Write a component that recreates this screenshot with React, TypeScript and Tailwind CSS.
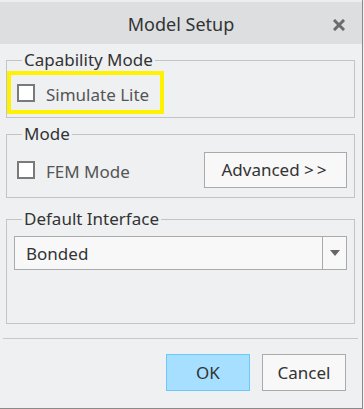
import React from "react"

const font = { fontFamily: '"Noto Sans", "Open Sans", sans-serif' }

function CheckBox() {
  return <span className="inline-block w-[18px] h-[18px] border-2 border-[#7a7a7a] bg-white shrink-0" />
}

export default function App() {
  return (
    <div className="w-[364px] h-[409px] bg-[#eef0f2] text-[#333]" style={font}>
      <div className="w-[363px] h-[409px] border-r border-b border-[#8a8a8a] flex flex-col">
        {/* title bar */}
        <div className="h-[44px] border-t-2 border-[#eceeef] bg-[#dcdedf] flex items-center relative shrink-0">
          <div className="flex-1 text-center text-[18px] text-[#333] pt-[2px]">Model Setup</div>
          <svg className="absolute right-[17px] top-[17px]" width="12" height="12" viewBox="0 0 12 12">
            <path d="M2 2 L10 10 M10 2 L2 10" stroke="#6b6b6b" strokeWidth="3" strokeLinecap="square" />
          </svg>
        </div>

        {/* capability mode */}
        <fieldset className="mt-[6px] ml-[6px] w-[349px] h-[68px] border border-[#c4c4c4] p-0">
          <legend className="ml-[15px] px-[2px] text-[17px] leading-[20px] text-[#333]">Capability Mode</legend>
          <div className="mt-[1px] w-[157px] h-[43px] border-4 border-[#fff200] flex items-center pl-[6px] gap-[11px]">
            <CheckBox />
            <span className="text-[17px] text-[#555] pt-[4px]">Simulate Lite</span>
          </div>
        </fieldset>

        {/* mode */}
        <fieldset className="mt-[6px] ml-[6px] w-[349px] h-[74px] border border-[#c4c4c4] p-0">
          <legend className="ml-[15px] px-[2px] text-[17px] leading-[20px] text-[#333]">Mode</legend>
          <div className="flex items-center pl-[10px] pr-[7px] mt-[8px]">
            <CheckBox />
            <span className="ml-[11px] text-[17px] text-[#555] pt-[4px]">FEM Mode</span>
            <button className="ml-auto w-[143px] h-[36px] bg-[#f8f8f8] border border-[#aaaaaa] text-[17px] text-[#333]">
              Advanced <span className="tracking-[3px]">&gt;&gt;</span>
            </button>
          </div>
        </fieldset>

        {/* default interface */}
        <fieldset className="mt-[11px] ml-[6px] w-[349px] h-[115px] border border-[#c4c4c4] p-0">
          <legend className="ml-[15px] px-[2px] text-[17px] leading-[20px] text-[#333]">Default Interface</legend>
          <div className="mt-[7px] ml-[7px] w-[333px] h-[34px] bg-[#f8f8f8] border border-[#aaaaaa] flex">
            <div className="flex-1 flex items-center pl-[11px] text-[17px] text-[#333] pt-[1px]">Bonded</div>
            <div className="w-[24px] border-l border-[#aaaaaa] flex items-center justify-center">
              <svg width="10" height="6" viewBox="0 0 10 6">
                <path d="M0 0 H10 L5 6 Z" fill="#666" />
              </svg>
            </div>
          </div>
        </fieldset>

        {/* separator */}
        <div className="mt-[14px] ml-[3px] w-[355px] h-px bg-[#c8c8c8]" />

        {/* buttons */}
        <div className="flex justify-end gap-[12px] pr-[16px] mt-[15px]">
          <button className="w-[84px] h-[37px] bg-[#a6dfff] border border-[#6cc8f8] text-[17px] text-[#333]">OK</button>
          <button className="w-[84px] h-[37px] bg-[#f8f8f8] border border-[#aaaaaa] text-[17px] text-[#333]">Cancel</button>
        </div>
      </div>
    </div>
  )
}
